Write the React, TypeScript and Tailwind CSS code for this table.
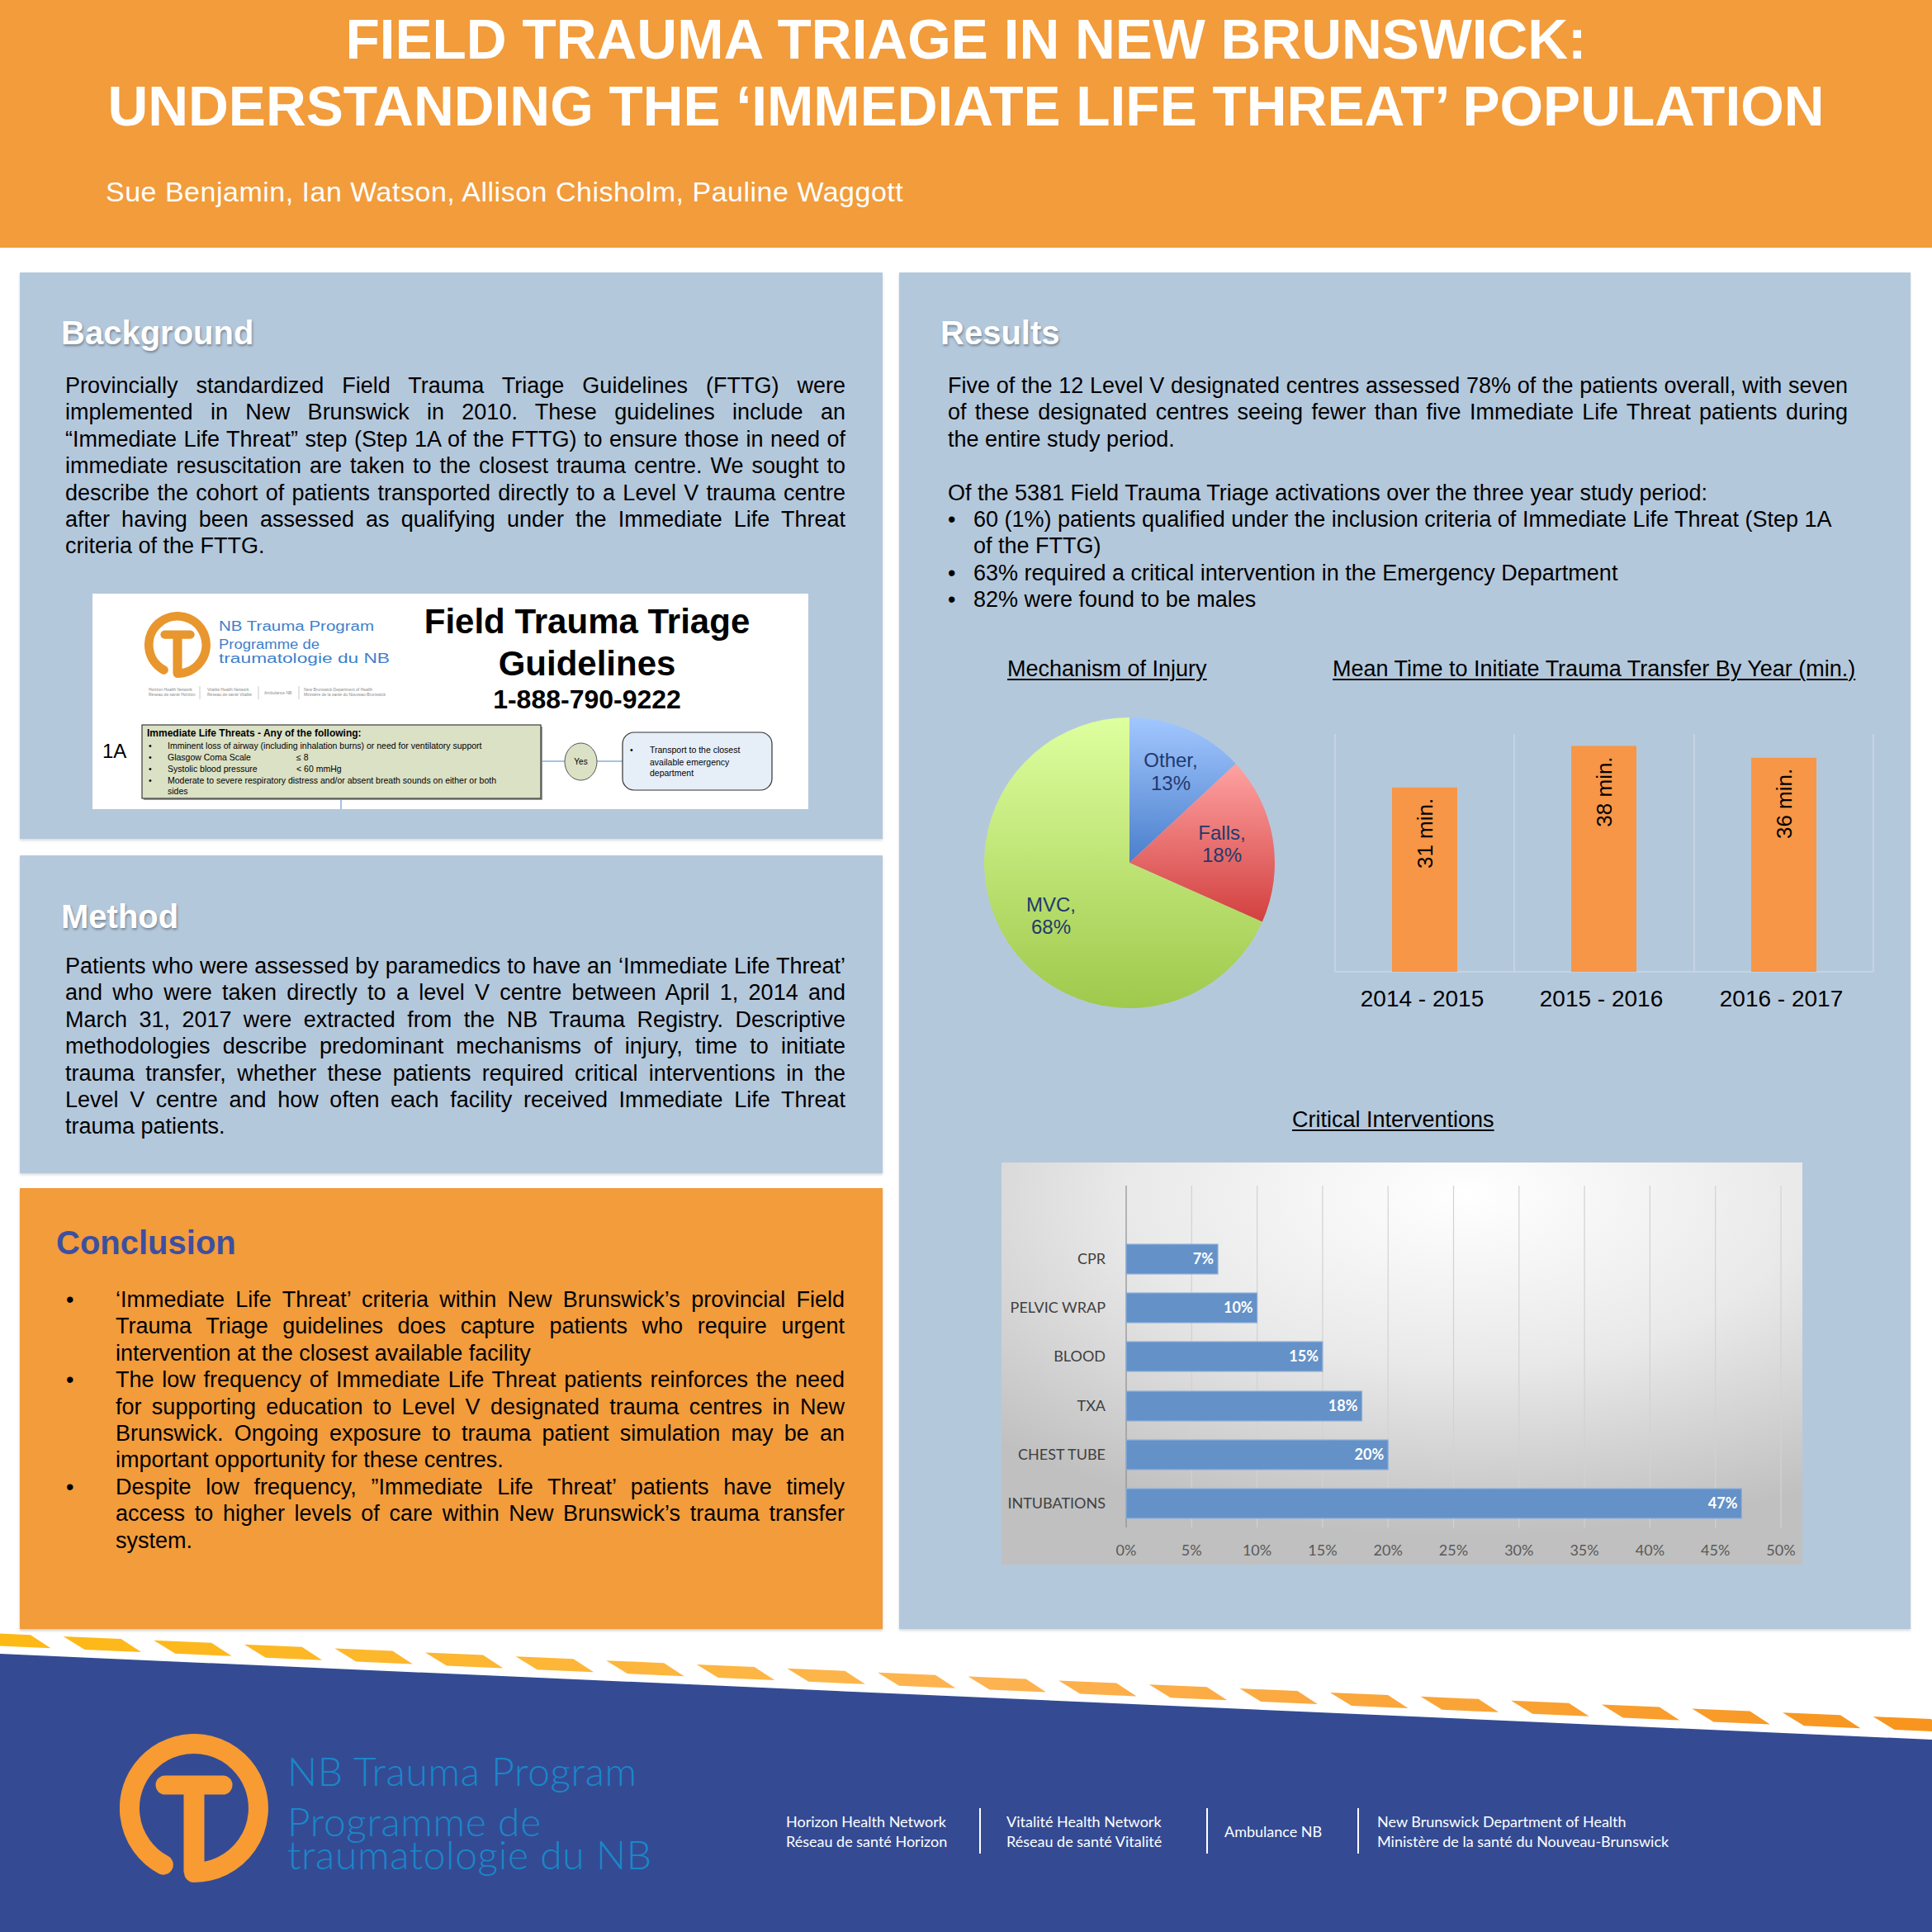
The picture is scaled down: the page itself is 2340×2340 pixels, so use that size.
import React from "react";

const heading = "text-[40px] leading-[48px] font-bold text-white [text-shadow:1px_2px_3px_rgba(0,0,0,0.35)]";

// justify every line but the last one, so the breaks stay where the poster has them
function JLines({ lines }: { lines: string[] }) {
  return (
    <div>
      {lines.map((l, i) => (
        <div key={i} className={i < lines.length - 1 ? "text-justify [text-align-last:justify]" : ""}>
          {l}
        </div>
      ))}
    </div>
  );
}

function TLogo({ color, className }: { color: string; className?: string }) {
  return (
    <svg viewBox="-90 -90 180 180" className={className}>
      <path d="M -37.2 68.6 A 78 78 0 1 1 0 78" fill="none" stroke={color} strokeWidth={24} strokeLinecap="round" />
      <line x1={0} y1={-28} x2={0} y2={78} stroke={color} strokeWidth={25} />
      <line x1={-35} y1={-28} x2={35} y2={-28} stroke={color} strokeWidth={23} strokeLinecap="round" />
    </svg>
  );
}

const backgroundLines = [
  "Provincially standardized Field Trauma Triage Guidelines (FTTG) were",
  "implemented in New Brunswick in 2010. These guidelines include an",
  "\u201CImmediate Life Threat\u201D step (Step 1A of the FTTG) to ensure those in need of",
  "immediate resuscitation are taken to the closest trauma centre. We sought to",
  "describe the cohort of patients transported directly to a Level V trauma centre",
  "after having been assessed as qualifying under the Immediate Life Threat",
  "criteria of the FTTG.",
];

const methodLines = [
  "Patients who were assessed by paramedics to have an \u2018Immediate Life Threat\u2019",
  "and who were taken directly to a level V centre between April 1, 2014 and",
  "March 31, 2017 were extracted from the NB Trauma Registry. Descriptive",
  "methodologies describe predominant mechanisms of injury, time to initiate",
  "trauma transfer, whether these patients required critical interventions in the",
  "Level V centre and how often each facility received Immediate Life Threat",
  "trauma patients.",
];

const conclusions = [
  [
    "\u2018Immediate Life Threat\u2019 criteria within New Brunswick\u2019s provincial Field",
    "Trauma Triage guidelines does capture patients who require urgent",
    "intervention at the closest available facility",
  ],
  [
    "The low frequency of Immediate Life Threat patients reinforces the need",
    "for supporting education to Level V designated trauma centres in New",
    "Brunswick. Ongoing exposure to trauma patient simulation may be an",
    "important opportunity for these centres.",
  ],
  [
    "Despite low frequency, \u201DImmediate Life Threat\u2019 patients have timely",
    "access to higher levels of care within New Brunswick\u2019s trauma transfer",
    "system.",
  ],
];

function FttgFigure() {
  const small = { fontFamily: "'Liberation Sans', Arial, sans-serif" };
  return (
    <svg width={867} height={261} viewBox="0 0 867 261" style={small}>
      <rect width={867} height={261} fill="#ffffff" />
      <svg x={63} y={22} width={80} height={80} viewBox="-90 -90 180 180">
        <path d="M -37.2 68.6 A 78 78 0 1 1 0 78" fill="none" stroke="#E8962E" strokeWidth={24} strokeLinecap="round" />
        <line x1={0} y1={-28} x2={0} y2={78} stroke="#E8962E" strokeWidth={25} />
        <line x1={-35} y1={-28} x2={35} y2={-28} stroke="#E8962E" strokeWidth={23} strokeLinecap="round" />
      </svg>
      <g fill="#3F7FCB" fontSize={16}>
        <text x={153} y={45} textLength={188} lengthAdjust="spacingAndGlyphs">NB Trauma Program</text>
        <text x={153} y={67} textLength={122} lengthAdjust="spacingAndGlyphs">Programme de</text>
        <text x={153} y={84} textLength={207} lengthAdjust="spacingAndGlyphs">traumatologie du NB</text>
      </g>
      <g fill="#8a8a8a" fontSize={5}>
        <text x={68} y={118}>Horizon Health Network</text>
        <text x={68} y={124}>Réseau de santé Horizon</text>
        <text x={139} y={118}>Vitalité Health Network</text>
        <text x={139} y={124}>Réseau de santé Vitalité</text>
        <text x={208} y={122}>Ambulance NB</text>
        <text x={256} y={118}>New Brunswick Department of Health</text>
        <text x={256} y={124}>Ministère de la santé du Nouveau-Brunswick</text>
      </g>
      <g stroke="#bdbdbd" strokeWidth={0.8}>
        <line x1={130} y1={112} x2={130} y2={128} />
        <line x1={201} y1={112} x2={201} y2={128} />
        <line x1={250} y1={112} x2={250} y2={128} />
      </g>
      <g textAnchor="middle" fontWeight="bold" fill="#000">
        <text x={599} y={48} fontSize={42}>Field Trauma Triage</text>
        <text x={599} y={99} fontSize={42}>Guidelines</text>
        <text x={599} y={139} fontSize={32}>1-888-790-9222</text>
      </g>
      <text x={12} y={199} fontSize={24}>1A</text>
      <g stroke="#86AEDC" strokeWidth={1.5}>
        <line x1={543} y1={203} x2={572} y2={203} />
        <line x1={611} y1={203} x2={642} y2={203} />
        <line x1={301} y1={248} x2={301} y2={261} />
      </g>
      <rect x={62} y={161} width={483} height={89} fill="#9a9a9a" />
      <rect x={60} y={159} width={483} height={89} fill="#DBE1C5" stroke="#3a3a3a" strokeWidth={1.2} />
      <text x={66} y={173} fontSize={12} fontWeight="bold">Immediate Life Threats - Any of the following:</text>
      <g fontSize={10.5}>
        <text x={68} y={188}>•</text>
        <text x={91} y={188}>Imminent loss of airway (including inhalation burns) or need for ventilatory support</text>
        <text x={68} y={202}>•</text>
        <text x={91} y={202}>Glasgow Coma Scale</text>
        <text x={247} y={202}>≤ 8</text>
        <text x={68} y={216}>•</text>
        <text x={91} y={216}>Systolic blood pressure</text>
        <text x={247} y={216}>&lt; 60 mmHg</text>
        <text x={68} y={230}>•</text>
        <text x={91} y={230}>Moderate to severe respiratory distress and/or absent breath sounds on either or both</text>
        <text x={91} y={243}>sides</text>
      </g>
      <ellipse cx={591.5} cy={203.5} rx={19.5} ry={22.5} fill="#DBE1C5" stroke="#555" strokeWidth={1} />
      <text x={591.5} y={207} fontSize={10} textAnchor="middle">Yes</text>
      <rect x={642} y={168} width={181} height={70} rx={14} fill="#E6EEF8" stroke="#333" strokeWidth={1.2} />
      <g fontSize={10.5}>
        <text x={651} y={193}>•</text>
        <text x={675} y={193}>Transport to the closest</text>
        <text x={675} y={208}>available emergency</text>
        <text x={675} y={221}>department</text>
      </g>
    </svg>
  );
}

function PieChart() {
  return (
    <svg width={360} height={356} viewBox="0 0 360 356" className="mt-[42px] block" style={{ fontFamily: "'Liberation Sans', Arial, sans-serif" }}>
      <defs>
        <linearGradient id="gOther" x1="0" y1="0" x2="0" y2="1">
          <stop offset="0" stopColor="#A2C7FF" />
          <stop offset="1" stopColor="#4A7FCB" />
        </linearGradient>
        <linearGradient id="gFalls" x1="0" y1="0" x2="0" y2="1">
          <stop offset="0" stopColor="#FFA2A2" />
          <stop offset="1" stopColor="#D2403F" />
        </linearGradient>
        <linearGradient id="gMvc" x1="0" y1="0" x2="0" y2="1">
          <stop offset="0" stopColor="#DEFF9F" />
          <stop offset="1" stopColor="#9FC94C" />
        </linearGradient>
      </defs>
      <path d="M178,177 L178,1 A176,176 0 0 1 306.7,57 Z" fill="url(#gOther)" />
      <path d="M178,177 L306.7,57 A176,176 0 0 1 338.8,248.6 Z" fill="url(#gFalls)" />
      <path d="M178,177 L338.8,248.6 A176,176 0 1 1 178,1 Z" fill="url(#gMvc)" />
      <g fill="#213A6C" fontSize={24} textAnchor="middle">
        <text x={228} y={61}>Other,</text>
        <text x={228} y={89}>13%</text>
        <text x={290} y={149}>Falls,</text>
        <text x={290} y={176}>18%</text>
        <text x={83} y={236}>MVC,</text>
        <text x={83} y={263}>68%</text>
      </g>
    </svg>
  );
}

const years = [
  { label: "2014 - 2015", v: 31, x: 72 },
  { label: "2015 - 2016", v: 38, x: 289 },
  { label: "2016 - 2017", v: 36, x: 507 },
];

function TimeChart() {
  const base = 318;
  return (
    <svg width={660} height={380} viewBox="0 0 660 380" className="mt-[33px] block" style={{ fontFamily: "'Liberation Sans', Arial, sans-serif" }}>
      <g stroke="#CAD7E5" strokeWidth={1.5}>
        {[3, 220, 438, 655].map((x) => (
          <line key={x} x1={x} y1={30} x2={x} y2={base} />
        ))}
        <line x1={3} y1={base} x2={655} y2={base} />
      </g>
      {years.map((y) => {
        const h = y.v * 7.2;
        const top = base - h;
        const cx = y.x + 39.5;
        return (
          <g key={y.label}>
            <rect x={y.x} y={top} width={79} height={h} fill="#F79646" />
            <text transform={`translate(${cx + 9},${top + 13}) rotate(-90)`} textAnchor="end" fontSize={26} fill="#000">
              {y.v} min.
            </text>
            <text x={cx - 3} y={360} textAnchor="middle" fontSize={28} fill="#000">
              {y.label}
            </text>
          </g>
        );
      })}
    </svg>
  );
}

const interventions = [
  { label: "CPR", v: 7 },
  { label: "PELVIC WRAP", v: 10 },
  { label: "BLOOD", v: 15 },
  { label: "TXA", v: 18 },
  { label: "CHEST TUBE", v: 20 },
  { label: "INTUBATIONS", v: 47 },
];

function InterventionChart() {
  const x0 = 151;
  const per = 15.86;
  const tops = [99, 158, 217, 277, 336, 395];
  return (
    <svg width={970} height={487} viewBox="0 0 970 487" className="mt-[36px] ml-[74px] block" style={{ fontFamily: "Lato, 'Liberation Sans', sans-serif" }}>
      <defs>
        <radialGradient id="gBg" cx="58%" cy="8%" r="85%">
          <stop offset="0" stopColor="#FFFFFF" />
          <stop offset="0.5" stopColor="#E9E9E9" />
          <stop offset="1" stopColor="#C0C0C0" />
        </radialGradient>
      </defs>
      <rect width={970} height={487} fill="url(#gBg)" />
      {Array.from({ length: 11 }).map((_, i) => (
        <line key={i} x1={x0 + i * 79.3} y1={28} x2={x0 + i * 79.3} y2={442} stroke={i === 0 ? "#8f8f8f" : "#D2D2D2"} strokeWidth={1.2} />
      ))}
      {interventions.map((d, i) => {
        const w = d.v * per;
        const t = tops[i];
        return (
          <g key={d.label}>
            <rect x={x0} y={t} width={w} height={36} fill="#6491C7" stroke="#8DB0DA" strokeWidth={1.2} />
            <text x={x0 + w - 5} y={t + 24} textAnchor="end" fontSize={18} fontWeight="bold" fill="#ffffff">
              {d.v}%
            </text>
            <text x={126} y={t + 24} textAnchor="end" fontSize={18} fill="#404040">
              {d.label}
            </text>
          </g>
        );
      })}
      {Array.from({ length: 11 }).map((_, i) => (
        <text key={i} x={x0 + i * 79.3} y={476} textAnchor="middle" fontSize={18} fill="#595959">
          {i * 5}%
        </text>
      ))}
    </svg>
  );
}

function FooterShape() {
  const dashes = Array.from({ length: 23 }).map((_, i) => {
    const a = -33 + 109.6 * i;
    const yt = 9 + 0.0443 * (a - 76.5);
    return `${a},${yt} ${a + 70},${yt + 3} ${a + 94.5},${yt + 19} ${a + 26},${yt + 16}`;
  });
  return (
    <svg className="absolute inset-0" width={2340} height={367} viewBox="0 0 2340 367">
      <defs>
        <linearGradient id="gStripe" x1="0" y1="0" x2="2340" y2="0" gradientUnits="userSpaceOnUse">
          <stop offset="0" stopColor="#FDB913" />
          <stop offset="0.5" stopColor="#FDB452" />
          <stop offset="1" stopColor="#F7941D" />
        </linearGradient>
      </defs>
      {dashes.map((p, i) => (
        <polygon key={i} points={p} fill="url(#gStripe)" />
      ))}
      <polygon points="0,30 2340,134 2340,367 0,367" fill="#344B94" />
    </svg>
  );
}

export default function App() {
  return (
    <div className="w-[2340px] h-[2340px] overflow-hidden bg-white text-black font-['Liberation_Sans',Arial,sans-serif]">
      {/* title bar */}
      <header className="h-[300px] bg-[#F29C3B] pt-[7px]">
        <h1 className="text-center text-white font-bold text-[67.6px] leading-[81px]">
          FIELD TRAUMA TRIAGE IN NEW BRUNSWICK:
          <br />
          UNDERSTANDING THE {"\u2018"}IMMEDIATE LIFE THREAT{"\u2019"} POPULATION
        </h1>
        <p className="mt-[43px] ml-[128px] text-white text-[34px] leading-[40px] tracking-[0.5px]">
          Sue Benjamin, Ian Watson, Allison Chisholm, Pauline Waggott
        </p>
      </header>

      <div className="flex gap-[20px] pl-[24px] pt-[30px] h-[1673px] text-[27px] leading-[32.4px]">
        {/* left column */}
        <div className="w-[1045px] flex flex-col">
          <section className="h-[686px] bg-[#B4C8DC] pt-[49px] pl-[50px] pr-[45px] shadow-[0_2px_3px_rgba(0,0,0,0.15)]">
            <h2 className={heading}>Background</h2>
            <div className="mt-[24px] ml-[5px]">
              <JLines lines={backgroundLines} />
            </div>
            <div className="mt-[41px] ml-[38px] w-[867px] h-[261px]">
              <FttgFigure />
            </div>
          </section>

          <section className="mt-[20px] h-[385px] bg-[#B4C8DC] pt-[50px] pl-[50px] pr-[45px] shadow-[0_2px_3px_rgba(0,0,0,0.15)]">
            <h2 className={heading}>Method</h2>
            <div className="mt-[20px] ml-[5px]">
              <JLines lines={methodLines} />
            </div>
          </section>

          <section className="mt-[18px] h-[534px] bg-[#F29C3B] pt-[42px] pl-[44px] pr-[46px] shadow-[0_2px_3px_rgba(0,0,0,0.2)]">
            <h2 className="text-[40px] leading-[48px] font-bold text-[#3D4FA0]">Conclusion</h2>
            <div className="mt-[29px] ml-[12px]">
              {conclusions.map((c, i) => (
                <div key={i} className="flex">
                  <span className="w-[60px] shrink-0">•</span>
                  <div className="flex-1">
                    <JLines lines={c} />
                  </div>
                </div>
              ))}
            </div>
          </section>
        </div>

        {/* right column */}
        <section className="w-[1225px] h-[1643px] bg-[#B4C8DC] pt-[49px] pl-[50px] shadow-[0_2px_3px_rgba(0,0,0,0.15)]">
          <h2 className={heading}>Results</h2>
          <div className="mt-[24px] ml-[9px] w-[1090px]">
            <JLines
              lines={[
                "Five of the 12 Level V designated centres assessed 78% of the patients overall, with seven",
                "of these designated centres seeing fewer than five Immediate Life Threat patients during",
                "the entire study period.",
              ]}
            />
            <div className="h-[32.4px]" />
            <div>Of the 5381 Field Trauma Triage activations over the three year study period:</div>
            <div className="flex">
              <span className="w-[31px] shrink-0">•</span>
              <span>
                60 (1%) patients qualified under the inclusion criteria of Immediate Life Threat (Step 1A
                <br />
                of the FTTG)
              </span>
            </div>
            <div className="flex">
              <span className="w-[31px] shrink-0">•</span>
              <span>63% required a critical intervention in the Emergency Department</span>
            </div>
            <div className="flex">
              <span className="w-[31px] shrink-0">•</span>
              <span>82% were found to be males</span>
            </div>
          </div>

          <div className="mt-[51px] flex items-start">
            <div className="ml-[51px] w-[360px]">
              <div className="ml-[30px] underline decoration-2 underline-offset-[3px]">Mechanism of Injury</div>
              <PieChart />
            </div>
            <div className="ml-[64px] w-[660px]">
              <div className="underline decoration-2 underline-offset-[3px] whitespace-nowrap">
                Mean Time to Initiate Trauma Transfer By Year (min.)
              </div>
              <TimeChart />
            </div>
          </div>

          <div className="mt-[101px] ml-[426px] underline decoration-2 underline-offset-[3px]">Critical Interventions</div>
          <InterventionChart />
        </section>
      </div>

      {/* footer band */}
      <footer className="relative h-[367px]">
        <FooterShape />
        <div className="relative flex items-start pl-[145px] pt-[127px]">
          <TLogo color="#F89B32" className="w-[180px] h-[180px] shrink-0" />
          <div className="ml-[23px] w-[604px] shrink-0 text-[#1A87C9] font-['Lato',sans-serif] font-light text-[48px] tracking-[0.6px]">
            <div className="mt-[22px] leading-[45px]">NB Trauma Program</div>
            <div className="mt-[19px] leading-[40px]">Programme de</div>
            <div className="leading-[40px]">traumatologie du NB</div>
          </div>
          <div className="mt-[90px] h-[55px] flex items-center text-white text-[18px] leading-[24px] font-['Lato',sans-serif]">
            <div className="w-[234px]">
              <div>Horizon Health Network</div>
              <div>Réseau de santé Horizon</div>
            </div>
            <div className="w-[2px] h-[55px] bg-white" />
            <div className="ml-[31px] w-[242px]">
              <div>Vitalité Health Network</div>
              <div>Réseau de santé Vitalité</div>
            </div>
            <div className="w-[2px] h-[55px] bg-white" />
            <div className="ml-[20px] w-[161px]">Ambulance NB</div>
            <div className="w-[2px] h-[55px] bg-white" />
            <div className="ml-[22px]">
              <div>New Brunswick Department of Health</div>
              <div>Ministère de la santé du Nouveau-Brunswick</div>
            </div>
          </div>
        </div>
      </footer>
    </div>
  );
}
